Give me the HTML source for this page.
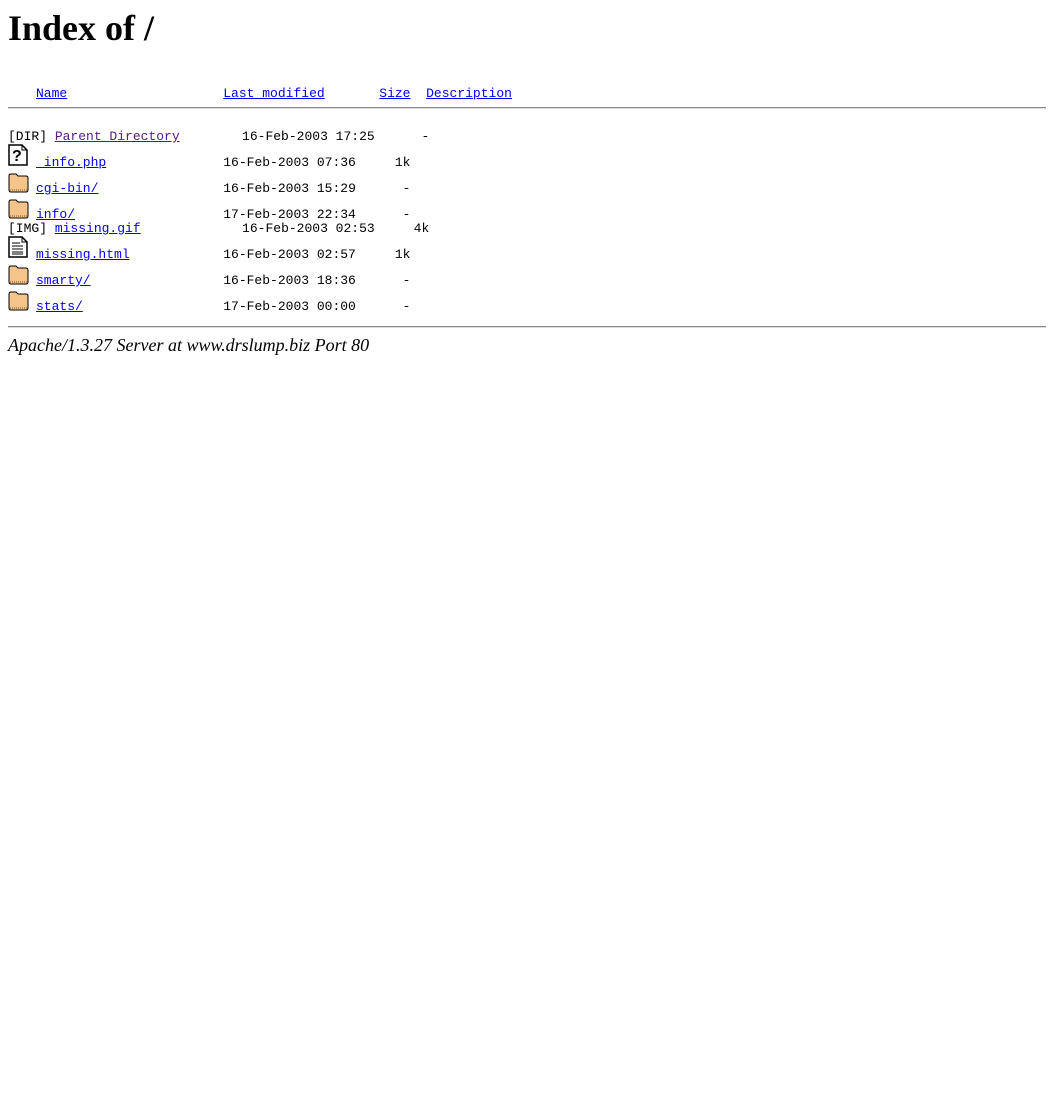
<!DOCTYPE html>
<html><head><meta charset="utf-8"><style>
body{margin:0;background:#fff;width:1054px;height:1098px;position:relative;overflow:hidden}
.m{position:absolute;font:13px/15px "Liberation Mono",monospace;white-space:pre;color:#000}
a{color:#00e;text-decoration:underline}
a.v{color:#551a8b}
h1{position:absolute;left:8px;top:8px;margin:0;font:bold 36px/40px "Liberation Serif",serif}
.hr{position:absolute;left:8px;width:1038px;height:0;border-top:1px solid #888;border-bottom:1px solid #ddd}
.ad{position:absolute;left:8px;top:335px;font:italic 18px/20px "Liberation Serif",serif;white-space:pre}
svg{position:absolute;left:8px}
</style></head><body>
<h1>Index of /</h1>
<div class="m" style="left:36px;top:86px"><a href="#">Name</a>                    <a href="#">Last modified</a>       <a href="#">Size</a>  <a href="#">Description</a></div>
<div class="hr" style="top:107px"></div>
<div class="m" style="left:8px;top:129px">[DIR] <a class="v" href="#">Parent Directory</a>        16-Feb-2003 17:25      -</div>
<svg style="top:144px" width="20" height="22" viewBox="0 0 20 22"><path d="M1 1H14L19 6V21H1Z" fill="#fff" stroke="#000" stroke-width="1.5"/><path d="M14 1V6H19" fill="none" stroke="#000"/><text x="4" y="17" font-family="Liberation Sans" font-weight="bold" font-size="16">?</text></svg>
<div class="m" style="left:36px;top:155px"><a href="#"> info.php</a>               16-Feb-2003 07:36     1k</div>
<svg style="top:173px" width="21" height="20" viewBox="0 0 21 20"><path d="M1 3Q1 1 3 1H8L10 3H18Q20 3 20 5V17Q20 19 18 19H3Q1 19 1 17Z" fill="#f5c48a" stroke="#000"/><path d="M2 17H19" stroke="#7a5020" stroke-dasharray="1 1"/></svg>
<div class="m" style="left:36px;top:181px"><a href="#">cgi-bin/</a>                16-Feb-2003 15:29      -</div>
<svg style="top:199px" width="21" height="20" viewBox="0 0 21 20"><path d="M1 3Q1 1 3 1H8L10 3H18Q20 3 20 5V17Q20 19 18 19H3Q1 19 1 17Z" fill="#f5c48a" stroke="#000"/><path d="M2 17H19" stroke="#7a5020" stroke-dasharray="1 1"/></svg>
<div class="m" style="left:36px;top:207px"><a href="#">info/</a>                   17-Feb-2003 22:34      -</div>
<div class="m" style="left:8px;top:221px">[IMG] <a href="#">missing.gif</a>             16-Feb-2003 02:53     4k</div>
<svg style="top:236px" width="20" height="22" viewBox="0 0 20 22"><path d="M1 1H14L19 6V21H1Z" fill="#fff" stroke="#000" stroke-width="1.5"/><path d="M14 1V6H19" fill="none" stroke="#000"/><path d="M4 7H12M4 10H15M4 13H15M4 16H15M4 18H15" stroke="#000"/></svg>
<div class="m" style="left:36px;top:247px"><a href="#">missing.html</a>            16-Feb-2003 02:57     1k</div>
<svg style="top:265px" width="21" height="20" viewBox="0 0 21 20"><path d="M1 3Q1 1 3 1H8L10 3H18Q20 3 20 5V17Q20 19 18 19H3Q1 19 1 17Z" fill="#f5c48a" stroke="#000"/><path d="M2 17H19" stroke="#7a5020" stroke-dasharray="1 1"/></svg>
<div class="m" style="left:36px;top:273px"><a href="#">smarty/</a>                 16-Feb-2003 18:36      -</div>
<svg style="top:291px" width="21" height="20" viewBox="0 0 21 20"><path d="M1 3Q1 1 3 1H8L10 3H18Q20 3 20 5V17Q20 19 18 19H3Q1 19 1 17Z" fill="#f5c48a" stroke="#000"/><path d="M2 17H19" stroke="#7a5020" stroke-dasharray="1 1"/></svg>
<div class="m" style="left:36px;top:299px"><a href="#">stats/</a>                  17-Feb-2003 00:00      -</div>
<div class="hr" style="top:326px"></div>
<div class="ad">Apache/1.3.27 Server at www.drslump.biz Port 80</div>
</body></html>
